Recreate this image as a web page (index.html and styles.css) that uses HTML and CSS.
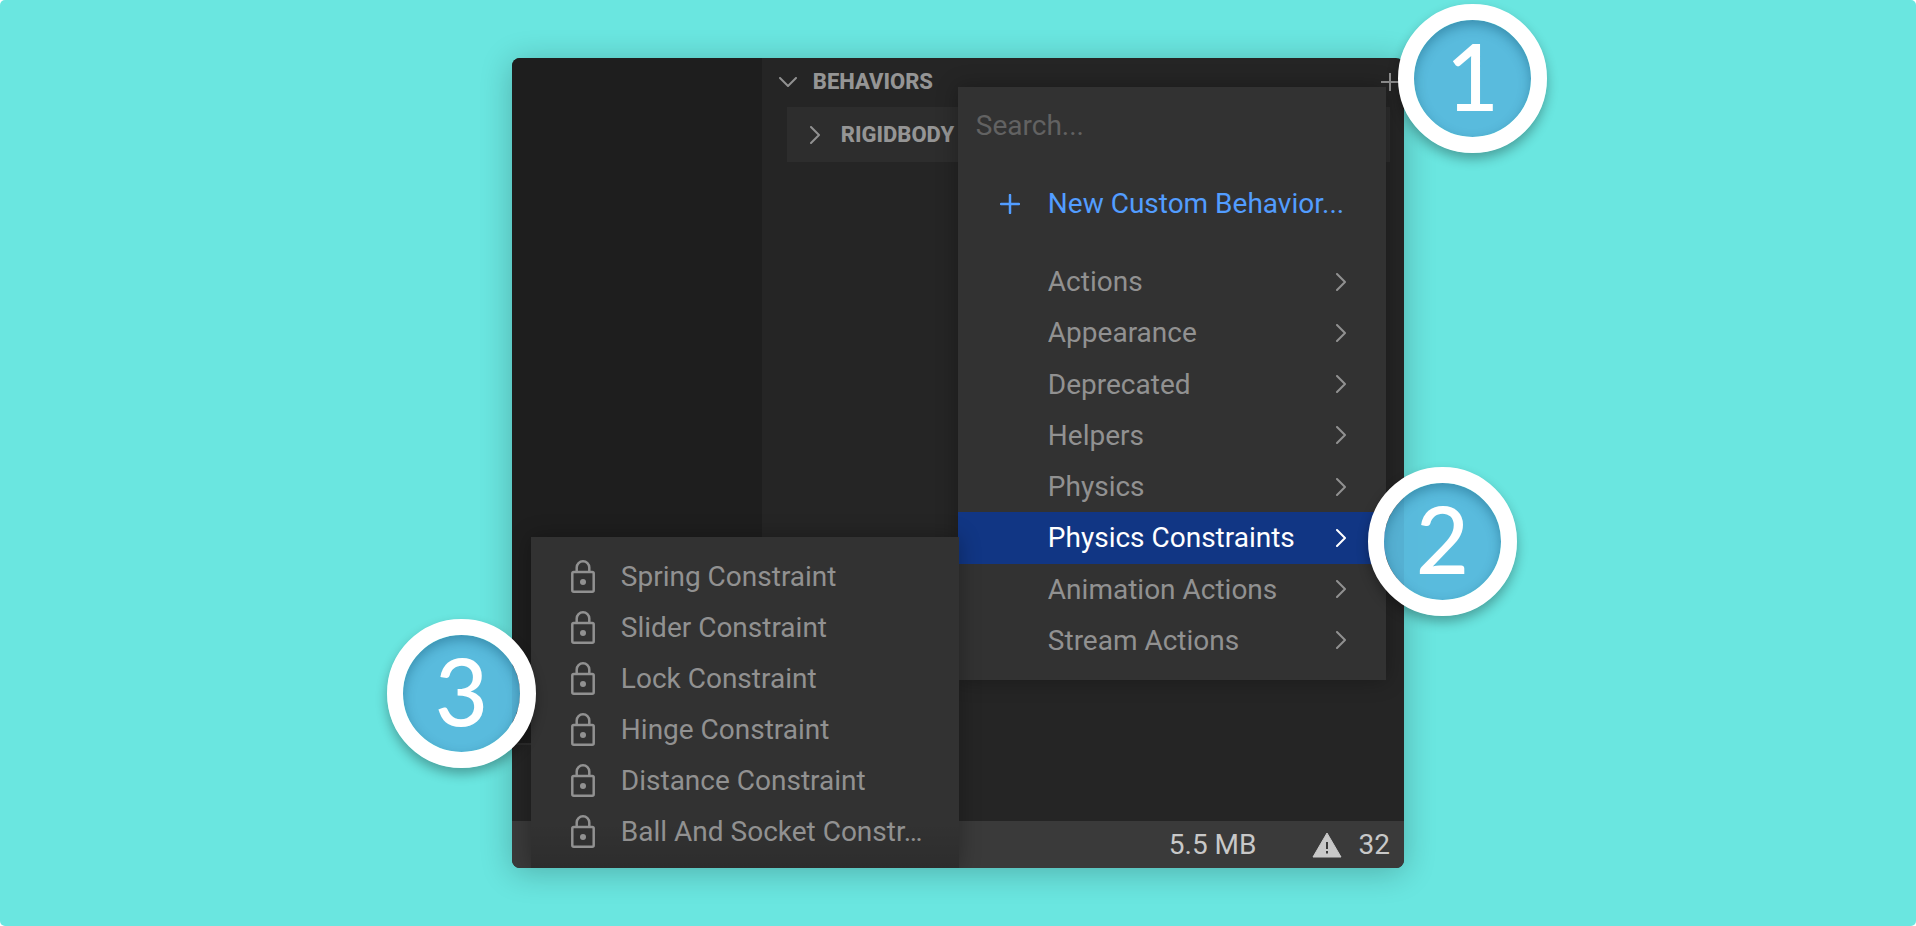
FILE: index.html
```
<!DOCTYPE html>
<html lang="en">
    <head>
        <meta charset="UTF-8" />
        <meta name="viewport" content="width=device-width, initial-scale=1.0" />
        <title>Adding a physics constraint</title>
        <link rel="stylesheet" href="styles.css">
    </head>
    <body>
        <!-- shared icons -->
        <svg class="sprite" aria-hidden="true">
            <symbol id="chevron" viewBox="0 0 10 18">
                <path d="M1 1l8 8-8 8" fill="none" stroke="currentColor" stroke-width="2" stroke-linecap="round" stroke-linejoin="round"></path>
            </symbol>
            <symbol id="lock" viewBox="0 0 24 33">
                <path d="M5.7 12V7.6a6.3 6.3 0 0 1 12.6 0V12" fill="none" stroke="currentColor" stroke-width="2.5"></path>
                <rect x="1.3" y="12" width="21.4" height="19.7" rx="1.5" fill="none" stroke="currentColor" stroke-width="2.5"></rect>
                <circle cx="12" cy="22" r="3" fill="currentColor"></circle>
            </symbol>
        </svg>

        <main class="stage">
            <div class="figure">
                <div class="window">
                    <div class="panels">
                        <div class="viewport">
                            <div class="console"></div>
                        </div>
                        <section class="inspector">
                            <header class="section-head">
                                <svg class="fold" viewBox="0 0 18 10"><path d="M1 1l8 8 8-8" fill="none" stroke="currentColor" stroke-width="2" stroke-linecap="round" stroke-linejoin="round"></path></svg>
                                <h2>BEHAVIORS</h2>
                                <button class="add" aria-label="Add behavior">
                                    <svg viewBox="0 0 18 18"><path d="M9 0v18M0 9h18" stroke="currentColor" stroke-width="2"></path></svg>
                                </button>
                            </header>
                            <div class="card">
                                <svg class="chevron"><use href="#chevron"></use></svg>
                                <h3>RIGIDBODY</h3>
                            </div>
                        </section>
                    </div>
                    <footer class="status">
                        <span>5.5 MB</span>
                        <span class="warnings">
                            <svg viewBox="0 0 30 26"><path d="M15 1L29 25H1z" fill="currentColor" stroke="currentColor" stroke-width="1" stroke-linejoin="round"></path><path d="M15 10v7M15 19v2.5" stroke="#3a3a3a" stroke-width="2"></path></svg>
                            32
                        </span>
                    </footer>

                    <div class="menu">
                        <input class="search" type="text" placeholder="Search..." aria-label="Search">
                        <button class="item create">
                            <svg class="plus" viewBox="0 0 20 20"><path d="M10 1v18M1 10h18" stroke="currentColor" stroke-width="2.5" stroke-linecap="round"></path></svg>
                            <span>New Custom Behavior...</span>
                        </button>
                        <div class="list">
                            <button class="item"><span>Actions</span><svg class="chevron"><use href="#chevron"></use></svg></button>
                            <button class="item"><span>Appearance</span><svg class="chevron"><use href="#chevron"></use></svg></button>
                            <button class="item"><span>Deprecated</span><svg class="chevron"><use href="#chevron"></use></svg></button>
                            <button class="item"><span>Helpers</span><svg class="chevron"><use href="#chevron"></use></svg></button>
                            <button class="item"><span>Physics</span><svg class="chevron"><use href="#chevron"></use></svg></button>
                            <button class="item active"><span>Physics Constraints</span><svg class="chevron"><use href="#chevron"></use></svg></button>
                            <button class="item"><span>Animation Actions</span><svg class="chevron"><use href="#chevron"></use></svg></button>
                            <button class="item"><span>Stream Actions</span><svg class="chevron"><use href="#chevron"></use></svg></button>
                        </div>
                    </div>

                    <div class="submenu">
                        <button class="item"><svg class="lock"><use href="#lock"></use></svg><span>Spring Constraint</span></button>
                        <button class="item"><svg class="lock"><use href="#lock"></use></svg><span>Slider Constraint</span></button>
                        <button class="item"><svg class="lock"><use href="#lock"></use></svg><span>Lock Constraint</span></button>
                        <button class="item"><svg class="lock"><use href="#lock"></use></svg><span>Hinge Constraint</span></button>
                        <button class="item"><svg class="lock"><use href="#lock"></use></svg><span>Distance Constraint</span></button>
                        <button class="item"><svg class="lock"><use href="#lock"></use></svg><span>Ball And Socket Constr…</span></button>
                    </div>
                </div>

                <div class="step step-1">1</div>
                <div class="step step-2">2</div>
                <div class="step step-3">3</div>
            </div>
        </main>
    </body>
</html>
```

FILE: styles.css
```
* {
    box-sizing: border-box;
}
body {
    margin: 0;
    background-color: #fff;
    font-family: Roboto, "Liberation Sans", sans-serif;
    font-size: 28px;
    color: #919191;
}
button,
input {
    margin: 0;
    padding: 0;
    border: 0;
    background: none;
    font: inherit;
    color: inherit;
}
.sprite {
    position: absolute;
    width: 0;
    height: 0;
}
.stage {
    display: flex;
    justify-content: center;
    min-height: 100vh;
    padding: 58px 0;
    border-radius: 5px;
    background-color: #6ae6e0;
    overflow: hidden;
}
.figure {
    position: relative;
    display: flex;
    width: 100%;
    max-width: 892px;
}
.window {
    position: relative;
    display: flex;
    flex-direction: column;
    flex: 1;
    border-radius: 8px;
    background-color: #252525;
    box-shadow: 0 4px 32px rgba(0, 0, 0, 0.24);
    overflow: hidden;
}
.panels {
    display: flex;
    flex: 1;
}
.viewport {
    display: flex;
    flex-direction: column;
    justify-content: flex-end;
    width: 28%;
    background-color: #1e1e1e;
}
.console {
    height: 78px;
    border-top: 2px solid #303030;
    background-color: #252525;
}
.inspector {
    flex: 1;
}
.section-head {
    display: flex;
    align-items: center;
    gap: 16px;
    height: 47px;
    padding: 0 5px 0 17px;
}
h2,
h3 {
    margin: 0;
    font-size: 22px;
    font-weight: 800;
    line-height: 28px;
    color: #959595;
}
.fold {
    width: 18px;
    height: 10px;
}
.add {
    margin-left: auto;
    line-height: 0;
}
.add svg {
    width: 18px;
    height: 18px;
}
.chevron {
    flex: none;
    width: 10px;
    height: 18px;
}
.card {
    display: flex;
    align-items: center;
    gap: 21px;
    height: 55px;
    margin: 2px 14px 0 25px;
    padding-left: 23px;
    background-color: #2d2d2d;
}
.status {
    display: flex;
    align-items: center;
    justify-content: flex-end;
    gap: 55px;
    height: 47px;
    padding-right: 14px;
    background-color: #3a3a3a;
    font-size: 28px;
    color: #c8c8c8;
}
.warnings {
    display: flex;
    align-items: center;
    gap: 17px;
}
.warnings svg {
    width: 30px;
    height: 26px;
}
.menu,
.submenu {
    position: absolute;
    width: 48%;
    background-color: #323232;
    box-shadow: 0 0 20px rgba(0, 0, 0, 0.3);
}
.menu {
    top: 29px;
    right: 18px;
    padding-bottom: 14px;
}
.submenu {
    right: 445px;
    bottom: 0;
    padding: 14px 0 11px;
    background-image: linear-gradient(transparent 285px, rgba(0, 0, 0, 0.1));
}
.search {
    display: block;
    width: 100%;
    height: 76px;
    padding: 0 18px;
}
.search::placeholder {
    color: #626262;
    opacity: 1;
}
.list {
    display: grid;
    grid-auto-rows: 1fr;
    min-height: 410px;
}
.item {
    display: flex;
    align-items: center;
    justify-content: space-between;
    width: 100%;
    min-height: 51px;
    padding: 0 40px 0 90px;
    text-align: left;
}
.item span {
    overflow: hidden;
    text-overflow: ellipsis;
    white-space: nowrap;
}
.create {
    justify-content: flex-start;
    gap: 28px;
    margin: 15px 0 27px;
    padding: 0 0 0 42px;
    color: #529dff;
}
.plus {
    flex: none;
    width: 20px;
    height: 20px;
}
.active {
    background-color: #113684;
    color: #fff;
}
.submenu .item {
    justify-content: flex-start;
    gap: 26px;
    padding: 0 30px 0 40px;
}
.lock {
    flex: none;
    width: 24px;
    height: 33px;
}
/* numbered callouts */
.step {
    position: absolute;
    display: flex;
    align-items: center;
    justify-content: center;
    width: 149px;
    height: 149px;
    padding-bottom: 6px;
    border: 16px solid #fff;
    border-radius: 50%;
    background-color: rgba(89, 184, 220, 0.95);
    background-clip: padding-box;
    box-shadow: 0 6px 12px rgba(0, 0, 0, 0.3), inset 0 5px 12px rgba(0, 60, 90, 0.35);
    font-family: Lato, "Liberation Sans", sans-serif;
    font-size: 92px;
    font-weight: 500;
    line-height: 112px;
    color: #fff;
}
.step-1 {
    top: -54px;
    right: -143px;
}
.step-2 {
    top: 409px;
    right: -113px;
}
.step-3 {
    top: 561px;
    left: -125px;
}
```
